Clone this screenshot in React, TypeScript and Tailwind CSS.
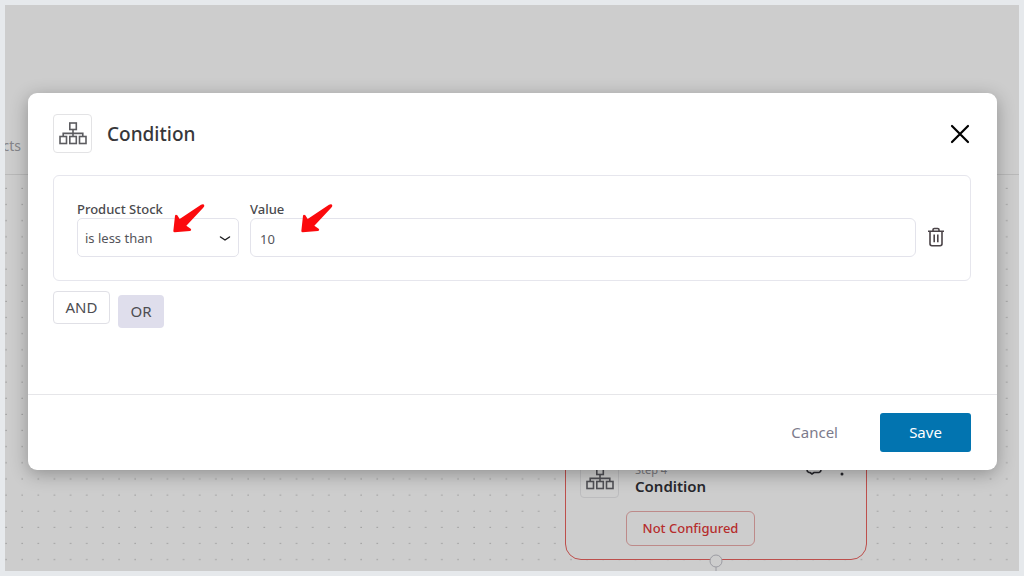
import React, { useState } from 'react';

const HierarchyIcon: React.FC = () => (
  <svg width="28" height="23" viewBox="0 0 28 23" fill="none" stroke="currentColor" strokeWidth="1.6" aria-hidden="true">
    <rect x="10.8" y="1" width="6.5" height="6.500" />
    <path d="M14 7.500v6.500M4.200 14.500v-3.100h19.600v3.100" />
    <rect x="1" y="14.500" width="6.500" height="7" />
    <rect x="10.800" y="14.500" width="6.500" height="7" />
    <rect x="20.500" y="14.500" width="6.500" height="7" />
  </svg>
);

const TrashIcon: React.FC = () => (
  <svg width="18" height="20" viewBox="0 0 18 20" fill="none" stroke="currentColor" strokeWidth="1.6" aria-hidden="true">
    <path d="M1 4.200h16M6 4V2.800q0-1.300 1.300-1.300h3.400q1.300 0 1.300 1.300V4" />
    <path d="M3 4.200v12.600q0 1.900 1.900 1.900h8.200q1.900 0 1.900-1.900V4.200M7.200 7.500v7.700M10.800 7.500v7.700" />
  </svg>
);

const Pointer: React.FC<{ className: string }> = ({ className }) => (
  <svg className={`pointer-events-none absolute ${className}`} width="32" height="29" viewBox="0 0 96 87" fill="#fb0a0d" aria-hidden="true">
    <path d="M84 2Q93-2 94 5Q94 8 90 12L40 65L53 74Q57 79 51 81L5 85Q1 85 1 81L6 35Q8 30 13 34L20 45Z" />
  </svg>
);

// Workflow editor that stays visible behind the dialog
const WorkflowCanvas: React.FC = () => (
  <div className="flex flex-1 flex-col">
    <div className="flex h-[170px] items-end border-b border-[#b9b9b9] pb-[18px]">
      <span className="flex w-4 justify-end overflow-hidden text-sm text-[#858589]">cts</span>
    </div>
    <div className="relative flex-1 overflow-hidden">
      <svg className="absolute inset-0 h-full w-full" aria-hidden="true">
        <defs>
          <pattern id="dots" x="0" y="14" width="16.14" height="16.14" patternUnits="userSpaceOnUse">
            <rect x="0.500" y="15" width="1.100" height="1.100" fill="#8c8c8c" />
          </pattern>
        </defs>
        <rect width="100%" height="100%" fill="url(#dots)" />
      </svg>

      <div className="absolute bottom-[11px] left-[560px] w-[302px] rounded-2xl border border-[#bd4f4c] bg-[#cdcdcd] px-[14px] pt-3 pb-[13px] text-[#27272c]">
        <div className="flex items-end gap-4">
          <span className="flex size-[39px] items-center justify-center rounded-sm border border-[#bcbcbe] text-[#505055]">
            <HierarchyIcon />
          </span>
          <div className="flex-1 pb-[3px]">
            <p className="text-[11px] leading-[14px] text-[#77777c]">Step 4</p>
            <h3 className="text-[15px] leading-[18px] font-semibold">Condition</h3>
          </div>
          <div className="flex gap-[18px] pr-2 pb-[22px]">
            <svg width="16" height="14" viewBox="0 0 16 14" fill="none" stroke="currentColor" strokeWidth="1.6" aria-hidden="true">
              <path d="M3 1h10q2 0 2 2v6q0 2-2 2.500H8l-2 1.500-2-1.500H3q-2-.5-2-2.500V3q0-2 2-2Z" />
            </svg>
            <svg width="4" height="15" viewBox="0 0 4 15" fill="currentColor" aria-hidden="true">
              <circle cx="2" cy="2" r="1.500" />
              <circle cx="2" cy="7.500" r="1.500" />
              <circle cx="2" cy="13" r="1.500" />
            </svg>
          </div>
        </div>
        <button type="button" className="mt-[13px] ml-[46px] block h-[35px] w-[129px] rounded-md border border-[#bd8a89] text-[13px] font-medium text-[#b62d2d]">
          Not Configured
        </button>
      </div>
      <svg className="absolute bottom-0 left-[704px]" width="14" height="17" viewBox="0 0 14 17" fill="#cdcdcd" stroke="#9c9ca3" aria-hidden="true">
        <path d="M7 12v5" />
        <circle cx="7" cy="7" r="6" />
      </svg>
    </div>
  </div>
);

const ConditionDialog: React.FC = () => {
  const [operator, setOperator] = useState('less');
  const [value, setValue] = useState('10');

  return (
    <div role="dialog" aria-labelledby="dialog-title" className="w-full rounded-[9px] bg-white shadow-[0_4px_18px_rgba(0,0,0,0.3)]">
      <header className="flex items-center gap-[15px] px-[25px] pt-[21px]">
        <span className="flex size-[39px] items-center justify-center rounded-sm border border-[#e3e3e5] text-[#5c5c60]">
          <HierarchyIcon />
        </span>
        <h2 id="dialog-title" className="flex-1 text-[19px] leading-6 font-medium text-[#37373a]">Condition</h2>
        <button type="button" aria-label="Close" className="text-black">
          <svg width="22" height="20" viewBox="0 0 22 20" fill="none" stroke="currentColor" strokeWidth="2.2" strokeLinecap="round" aria-hidden="true">
            <path d="M2 2l16 16M18 2L2 18" />
          </svg>
        </button>
      </header>

      <div className="min-h-[241px] pt-[22px] pr-[26px] pl-[25px]">
        <div className="flex items-end gap-[11px] rounded-md border border-[#e6e6ed] px-[23px] pt-6 pb-[23px]">
          <div className="relative w-[162px]">
            <label htmlFor="operator" className="block text-[13px] leading-[18px] font-medium text-[#4a4a4e]">Product Stock</label>
            <div className="relative">
              <select
                id="operator"
                value={operator}
                onChange={(e) => setOperator(e.target.value)}
                className="block h-[39px] w-full appearance-none rounded-[5px] border border-[#e3e3eb] bg-white px-[7px] pt-[3px] text-[13px] text-[#55555a] outline-none"
              >
                <option value="less">is less than</option>
                <option value="more">is greater than</option>
              </select>
              <svg className="pointer-events-none absolute top-4 right-2" width="12" height="9" viewBox="0 0 12 9" fill="none" stroke="#1f1f22" strokeWidth="1.5" strokeLinecap="round" strokeLinejoin="round" aria-hidden="true">
                <path d="M1.500 3l4.500 3 4.500-3" />
              </svg>
            </div>
            <Pointer className="top-1 left-24" />
          </div>
          <div className="relative flex-1">
            <label htmlFor="value" className="block text-[13px] leading-[18px] font-medium text-[#4a4a4e]">Value</label>
            <input
              id="value"
              type="text"
              value={value}
              onChange={(e) => setValue(e.target.value)}
              className="block h-[39px] w-full rounded-md border border-[#e3e3eb] px-[9px] pt-[2px] text-[13px] text-[#55555a] outline-none"
            />
            <Pointer className="top-1 left-[51px]" />
          </div>
          <button type="button" aria-label="Delete condition" className="mr-[2px] mb-[10px] text-[#4b4448]">
            <TrashIcon />
          </button>
        </div>

        <div className="flex items-start gap-2 pt-[10px] text-[15px] text-[#4d4d52]">
          <button type="button" className="h-[33px] w-[57px] rounded-sm border border-[#e0e0e6] bg-white">AND</button>
          <button type="button" className="mt-1 h-[33px] w-[46px] rounded-sm bg-[#dfdeec]">OR</button>
        </div>
      </div>

      <footer className="flex items-center justify-end gap-[26px] border-t border-[#e6e6e9] px-[26px] py-[18px] text-[15px]">
        <button type="button" className="px-4 text-[#7c7b8c]">Cancel</button>
        <button type="button" className="h-[39px] w-[91px] rounded-[3px] bg-[#0274b0] text-white">Save</button>
      </footer>
    </div>
  );
};

export default function App() {
  return (
    <div className="relative flex min-h-screen bg-[#e6e9ec] p-[5px] font-['Noto_Sans','Open_Sans',sans-serif]">
      <main className="flex flex-1 bg-[#cdcdcd]">
        <WorkflowCanvas />
      </main>
      <div className="absolute inset-0 flex items-start pt-[93px] pr-[27px] pl-7">
        <ConditionDialog />
      </div>
    </div>
  );
}
